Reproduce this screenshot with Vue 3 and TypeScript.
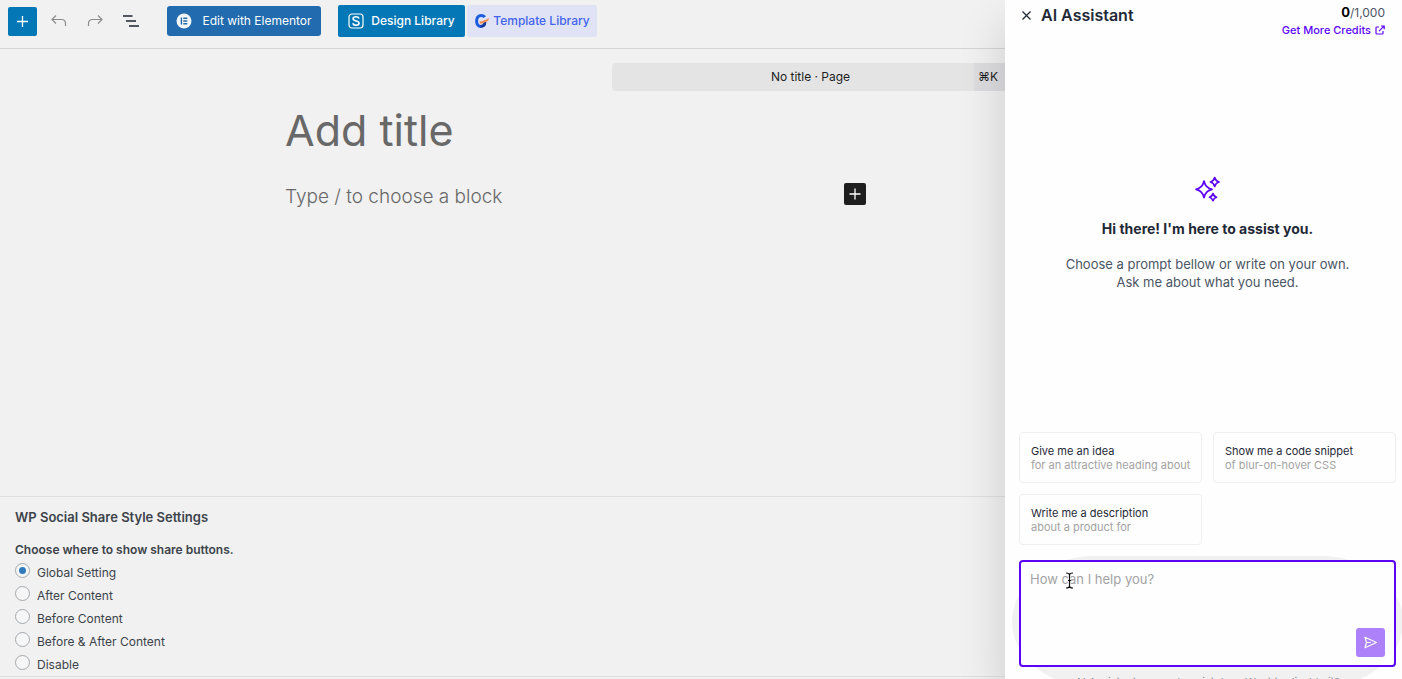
<script setup lang="ts">
import { ref } from 'vue'

interface Prompt {
  title: string
  detail: string
}

const placements: string[] = [
  'Global Setting',
  'After Content',
  'Before Content',
  'Before & After Content',
  'Disable',
]
const placement = ref<string>('Global Setting')

const prompts: Prompt[] = [
  { title: 'Give me an idea', detail: 'for an attractive heading about' },
  { title: 'Show me a code snippet', detail: 'of blur-on-hover CSS' },
  { title: 'Write me a description', detail: 'about a product for' },
]
const message = ref<string>('')

function usePrompt(prompt: Prompt): void {
  message.value = `${prompt.title} ${prompt.detail}`
}
</script>

<template>
  <div class="app">
    <main class="editor">
      <header class="toolbar">
        <button class="insert" type="button" aria-label="Add block">
          <svg width="29" height="29" viewBox="0 0 29 29"><path d="M14.5 9v11M9 14.5h11" stroke="#fff" stroke-width="1.3" /></svg>
        </button>
        <div class="tools">
          <button class="tool" type="button" aria-label="Undo">
            <svg width="20" height="20" viewBox="0 0 20 20" fill="none" stroke="#8c8c8c" stroke-width="1.2"><path d="M7 4.500 3 8.500l4 4M3 8.500h9.500q4 0 4 4v2.500" /></svg>
          </button>
          <button class="tool" type="button" aria-label="Redo">
            <svg width="20" height="20" viewBox="0 0 20 20" fill="none" stroke="#8c8c8c" stroke-width="1.2"><path d="m13 4.500 4 4-4 4M17 8.500H7.500q-4 0-4 4v2.500" /></svg>
          </button>
          <button class="tool" type="button" aria-label="Document overview">
            <svg width="20" height="20" viewBox="0 0 20 20" fill="none" stroke="#50575e" stroke-width="1.8"><path d="M2 5h9.500M5 10h10M8 15h10" /></svg>
          </button>
        </div>
        <button class="action elementor" type="button">
          <svg width="16" height="16" viewBox="0 0 16 16"><circle cx="8" cy="8" r="7.500" fill="#f4f8fb" /><path d="M4.700 4.500h1.400v7H4.700zM7.300 4.500h4v1.400h-4zM7.300 7.300h4v1.400h-4zM7.300 10.100h4v1.400h-4z" fill="#216bae" /></svg>
          Edit with Elementor
        </button>
        <div class="libraries">
          <button class="action design" type="button">
            <svg width="16" height="16" viewBox="0 0 16 16" fill="none" stroke="#fff"><rect x="1" y="1" width="14" height="14" rx="3" stroke-width="1.2" /><path d="M11 5.600C10.600 4.300 9.500 3.800 8 3.800c-1.700 0-2.900.8-2.900 2 0 3 6 1.300 6 4.300 0 1.300-1.300 2.100-3 2.100-1.800 0-2.900-.7-3.300-2" stroke-width="1.600" /></svg>
            Design Library
          </button>
          <button class="action template" type="button">
            <svg width="15" height="16" viewBox="0 0 15 16" fill="none"><path d="M10.800 4.200C9.800 2.800 8.500 2.500 7.200 2.500 4.400 2.500 2.600 4.800 2.600 8S4.400 13.500 7 13.500" stroke="#1a5de0" stroke-width="3" /><path d="M6.500 13.500c3 0 4.300-1.500 4.400-4.500" stroke="#173a9c" stroke-width="3" /><path d="M5.500 8.500C8 8.500 11.500 7.500 15 4.800l-.8 3c-2 .5-4.500 3-8.200 3z" fill="#f58a4b" /></svg>
            Template Library
          </button>
        </div>
      </header>

      <button class="command" type="button">
        <span class="document">No title · Page</span>
        <kbd class="shortcut">⌘K</kbd>
      </button>

      <section class="canvas">
        <h1 class="title">Add title</h1>
        <div class="block">
          <p class="hint">Type / to choose a block</p>
          <button class="block-add" type="button" aria-label="Add block">
            <svg width="22" height="22" viewBox="0 0 22 22"><path d="M11 5.500v11M5.500 11h11" stroke="#fff" stroke-width="1.3" /></svg>
          </button>
        </div>
      </section>

      <section class="settings">
        <h2 class="settings-title">WP Social Share Style Settings</h2>
        <fieldset class="choices">
          <legend class="legend">Choose where to show share buttons.</legend>
          <label v-for="option in placements" :key="option" class="choice">
            <input v-model="placement" class="radio" type="radio" name="placement" :value="option" />
            <span>{{ option }}</span>
          </label>
        </fieldset>
      </section>
    </main>

    <aside class="assistant">
      <header class="assistant-head">
        <button class="close" type="button" aria-label="Close">
          <svg width="11" height="11" viewBox="0 0 11 11"><path d="m1.500 1.500 8 8M9.500 1.500l-8 8" stroke="#1f2937" stroke-width="1.2" /></svg>
        </button>
        <h2 class="assistant-title">AI Assistant</h2>
        <div class="credits">
          <div class="count"><strong>0</strong>/1,000</div>
          <a class="more" href="#">
            Get More Credits
            <svg width="10" height="10" viewBox="0 0 10 10" fill="none" stroke="currentColor" stroke-width="1.2"><path d="M4 2H1.700Q1 2 1 2.700v5.600Q1 9 1.700 9h5.600Q8 9 8 8.300V6M6 1h3.200v3.200M9 1.200 4 6.200" /></svg>
          </a>
        </div>
      </header>

      <section class="welcome">
        <svg width="28" height="28" viewBox="0 0 28 28" fill="none" stroke="#5b03f5" stroke-width="1.7" stroke-linejoin="round"><path d="M10 6q1.500 7 8 8.300-6.500 1.300-8 8.300-1.500-7-8-8.300Q8.500 13 10 6zM20.700 2.500q1 3.700 4.300 4.500-3.300.8-4.300 4.500-1-3.700-4.300-4.500 3.300-.8 4.300-4.500zM19 18.500q.9 3 3.500 3.700-2.600.7-3.500 3.500-.9-2.800-3.500-3.500 2.600-.7 3.500-3.700z" /></svg>
        <h3 class="greeting">Hi there! I'm here to assist you.</h3>
        <p class="intro">Choose a prompt bellow or write on your own.<br />Ask me about what you need.</p>
      </section>

      <div class="prompts">
        <button v-for="prompt in prompts" :key="prompt.title" class="prompt" type="button" @click="usePrompt(prompt)">
          <span class="prompt-title">{{ prompt.title }}</span>
          <span class="prompt-detail">{{ prompt.detail }}</span>
        </button>
      </div>

      <form class="composer" @submit.prevent>
        <textarea v-model="message" class="message" placeholder="How can I help you?" aria-label="Message"></textarea>
        <button class="send" type="submit" aria-label="Send">
          <svg width="15" height="15" viewBox="0 0 15 15" fill="none" stroke="#fff" stroke-width="1.2" stroke-linejoin="round"><path d="M2 2.300 13.500 7.500 2 12.700l1.500-5.200zM3.500 7.500H8" /></svg>
        </button>
        <svg class="cursor" width="9" height="17" viewBox="0 0 9 17" fill="none"><path d="M1 1q3.500 0 3.500 2Q4.500 1 8 1M4.500 2.500v12M1 16q3.500 0 3.500-2 0 2 3.500 2M3 8.500h3" stroke="#fff" stroke-width="2.400" /><path d="M1 1q3.500 0 3.500 2Q4.500 1 8 1M4.500 2.500v12M1 16q3.500 0 3.500-2 0 2 3.500 2M3 8.500h3" stroke="#111" stroke-width="1.200" /></svg>
      </form>
      <p class="note">AI Assistant can make mistakes. Want to disable it?</p>
    </aside>
  </div>
</template>

<style>
body {
  margin: 0;
  background: #f1f1f1;
}
</style>

<style scoped>
.app {
  display: flex;
  height: 100vh;
  overflow: hidden;
  background: #f1f1f1;
  color: #3c434a;
  font: 12px/16px Inter, 'Liberation Sans', sans-serif;
}
.app *,
.app *::before {
  box-sizing: border-box;
}
button {
  display: flex;
  align-items: center;
  justify-content: center;
  margin: 0;
  padding: 0;
  border: 0;
  background: none;
  color: inherit;
  font: inherit;
  cursor: pointer;
}
h1,
h2,
h3,
p {
  margin: 0;
}
svg {
  flex: none;
}
.editor {
  display: flex;
  flex: 1;
  flex-direction: column;
  min-width: 0;
}
.toolbar {
  display: flex;
  align-items: center;
  height: 49px;
  padding: 0 8px 6px;
  border-bottom: 1px solid #d3d4d5;
}
.insert {
  width: 29px;
  height: 29px;
  border-radius: 2px;
  background: #0478b7;
}
.tools {
  display: flex;
  gap: 16px;
  margin: 0 26px 0 12px;
}
.tool {
  width: 20px;
  height: 20px;
}
.action {
  border-radius: 2px;
  font-weight: 500;
  white-space: nowrap;
}
.elementor {
  gap: 10px;
  width: 154px;
  height: 30px;
  border-radius: 3px;
  background: #216bae;
  color: #fff;
  font-weight: 400;
}
.libraries {
  display: flex;
  gap: 2px;
  margin-left: 17px;
}
.design {
  gap: 7px;
  width: 127px;
  height: 32px;
  background: #0478b7;
  color: #fff;
}
.template {
  gap: 4px;
  width: 130px;
  height: 32px;
  background: #e0e3f5;
  color: #4263eb;
}
.command {
  align-self: flex-end;
  flex: none;
  width: 397px;
  height: 28px;
  margin: 14px -4px 0 0;
  border-radius: 4px;
  background: #e4e4e4;
  color: #1e1e1e;
}
.document {
  flex: 1;
  margin-right: -35px;
}
.shortcut {
  width: 35px;
  padding-right: 7px;
  background: #dddde0;
  font: 12px/28px Inter, 'DejaVu Sans', sans-serif;
}
.canvas {
  flex: 1;
  width: 581px;
  margin: 13px 0 0 285px;
  color: #686868;
}
.title {
  font-size: 43px;
  font-weight: 400;
  line-height: 52px;
}
.block {
  display: flex;
  align-items: center;
  justify-content: space-between;
  margin-top: 23px;
}
.hint {
  font-size: 19px;
  font-weight: 300;
  line-height: 36px;
}
.block-add {
  width: 22px;
  height: 22px;
  margin-bottom: 6px;
  border-radius: 2px;
  background: #1e1e1e;
}
.settings {
  flex: none;
  padding: 12px 15px 0;
  margin-bottom: 2px;
  border: solid #dedfe0;
  border-width: 1px 0;
}
.settings-title {
  font-size: 13px;
  font-weight: 600;
  line-height: 16px;
}
.choices {
  margin: 0;
  padding: 0;
  border: 0;
}
.legend {
  padding: 17px 0 3px;
  font-weight: 600;
}
.choice {
  display: flex;
  gap: 7px;
  height: 23px;
  line-height: 23px;
}
.radio {
  display: grid;
  place-items: center;
  width: 15px;
  height: 15px;
  margin: 2px 0 0;
  border: 1px solid #a5a9ad;
  border-radius: 50%;
  background: #f6f6f6;
  appearance: none;
}
.radio:checked::before {
  width: 7px;
  height: 7px;
  border-radius: 50%;
  background: #2f7bbd;
  content: '';
}
.assistant {
  z-index: 1;
  display: flex;
  flex: none;
  flex-direction: column;
  width: 397px;
  padding: 0 6px 0 14px;
  background: #fefefe;
  box-shadow: 0 24px 44px rgba(0, 0, 0, 0.16);
}
.assistant-head {
  display: flex;
  align-items: flex-start;
  padding: 3px 11px 0 0;
}
.close {
  width: 15px;
  height: 24px;
}
.assistant-title {
  flex: 1;
  margin-left: 7px;
  color: #1f2937;
  font-size: 16px;
  font-weight: 600;
  line-height: 24px;
}
.credits {
  text-align: right;
}
.count {
  color: #4b5563;
  line-height: 18px;
}
.count strong {
  color: #000;
  font-size: 13px;
  font-weight: 700;
}
.more {
  display: flex;
  align-items: center;
  gap: 4px;
  color: #5b03f5;
  font-size: 11px;
  font-weight: 500;
  line-height: 16px;
  text-decoration: none;
}
.welcome {
  display: flex;
  flex: 1;
  flex-direction: column;
  align-items: center;
  justify-content: center;
  padding: 0 0 4px;
  text-align: center;
}
.greeting {
  margin: 16px 0;
  color: #1f2937;
  font-size: 14px;
  font-weight: 700;
  line-height: 20px;
}
.intro {
  color: #4b5563;
  font-size: 13px;
  line-height: 18px;
}
.prompts {
  display: grid;
  grid-template-columns: 1fr 1fr;
  gap: 11px;
}
.prompt {
  flex-direction: column;
  align-items: flex-start;
  padding: 11px 10px 10px 11px;
  border: 1px solid #efeff1;
  border-radius: 4px;
  font-size: 11px;
  line-height: 14px;
  text-align: left;
  white-space: nowrap;
}
.prompt-title {
  color: #1f2937;
}
.prompt-detail {
  color: #a3a3a3;
}
.composer {
  position: relative;
  margin-top: 15px;
}
.composer::before {
  position: absolute;
  inset: -4px -7px -20px;
  border-radius: 90px / 72px;
  background: #f1f1f1;
  content: '';
}
.message {
  position: relative;
  display: block;
  width: 100%;
  height: 107px;
  padding: 8px 9px;
  border: 2px solid #5b03f5;
  border-radius: 4px;
  outline: 0;
  background: #fefefe;
  color: #1f2937;
  font: 13px/18px Inter, 'Liberation Sans', sans-serif;
  resize: none;
}
.message::placeholder {
  color: #a3a3a3;
  opacity: 1;
}
.send {
  position: absolute;
  right: 11px;
  bottom: 10px;
  width: 29px;
  height: 29px;
  border-radius: 3px;
  background: #ad81fa;
}
.cursor {
  position: absolute;
  top: 12px;
  left: 46px;
}
.note {
  position: relative;
  margin: 7px 0 -11px;
  color: #8b8f96;
  font-size: 11px;
  line-height: 16px;
  text-align: center;
}
</style>
